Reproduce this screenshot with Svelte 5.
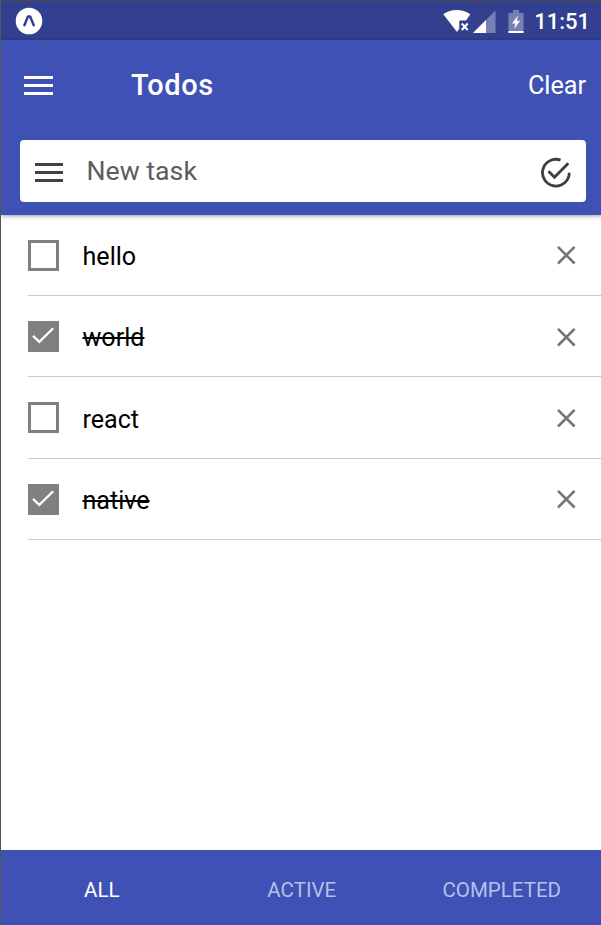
<script>
  let filter = $state('all');
  let todos = $state([
    { id: 1, text: 'hello', done: false },
    { id: 2, text: 'world', done: true },
    { id: 3, text: 'react', done: false },
    { id: 4, text: 'native', done: true },
  ]);
  const tabs = ['all', 'active', 'completed'];
  let shown = $derived(
    todos.filter((t) => filter === 'all' || (filter === 'completed') === t.done)
  );
  const remove = (id) => (todos = todos.filter((t) => t.id !== id));
</script>

<div class="screen">
  <div class="status">
    <svg width="28" height="28" viewBox="0 0 28 28">
      <circle cx="14" cy="14" r="13.3" fill="#fff" />
      <path d="M9.4 18.2 13 9.4h2.1L18.8 18.2" fill="none" stroke="#32408f" stroke-width="2.5" stroke-linecap="round" stroke-linejoin="round" />
    </svg>
    <div class="system">
      <svg class="wifi" width="28" height="24" viewBox="0 0 28 24">
        <path d="M.3 4.2Q13.5-4.2 27.3 4.2L23 10.5H16.3V18.5L14 22Z" fill="#fff" />
        <path d="m18.7 13.5 6 6.5m0-6.5-6 6.5" stroke="#fff" stroke-width="2" />
      </svg>
      <svg class="signal" width="23" height="24" viewBox="0 0 23 24">
        <path d="M0 23 22.5.5V23Z" fill="#7780b5" />
        <path d="M0 23 13 10V23Z" fill="#fff" />
      </svg>
      <svg class="battery" width="16" height="24" viewBox="0 0 16 24">
        <path d="M5 0h6v3h4.5v20H.5V3H5Z" fill="#7780b5" />
        <path d="M.5 21h15v2H.5ZM10 5.5 4 13.5h3.3L6.3 19 12 10.8H8.8Z" fill="#fff" />
      </svg>
      <span>11:51</span>
    </div>
  </div>

  <header>
    <div class="toolbar">
      <button class="menu" aria-label="Menu"><i></i><i></i><i></i></button>
      <h1>Todos</h1>
      <button class="clear" onclick={() => (todos = todos.filter((t) => !t.done))}>Clear</button>
    </div>
    <div class="entry">
      <div class="menu dark"><i></i><i></i><i></i></div>
      <span>New task</span>
      <svg width="32" height="32" viewBox="0 0 32 32" fill="none" stroke="#3e3e3e" stroke-width="2.8">
        <path d="M20.5 3.1A13.4 13.4 0 1 0 29.3 15.8" />
        <path d="m8.5 14.2 6 6L28.3 6.2" />
      </svg>
    </div>
  </header>

  <main>
    {#each shown as todo (todo.id)}
      <div class="row">
        <button class="box" class:checked={todo.done} aria-label="Toggle" onclick={() => (todo.done = !todo.done)}>
          {#if todo.done}
            <svg width="31" height="31" viewBox="0 0 31 31" fill="none" stroke="#fff" stroke-width="2.3">
              <path d="m5 14.8 6.3 6.1L25.2 7.2" />
            </svg>
          {/if}
        </button>
        <span class:done={todo.done}>{todo.text}</span>
        <button class="remove" aria-label="Remove" onclick={() => remove(todo.id)}>
          <svg width="20" height="20" viewBox="0 0 20 20" stroke="#757575" stroke-width="2.6">
            <path d="m2 1.9 16.6 16.6m0-16.6L2 18.5" />
          </svg>
        </button>
      </div>
    {/each}
  </main>

  <nav>
    {#each tabs as tab}
      <button class:active={filter === tab} onclick={() => (filter = tab)}>{tab.toUpperCase()}</button>
    {/each}
  </nav>
</div>

<style>
  .screen {
    box-sizing: border-box;
    width: 601px;
    height: 925px;
    display: flex;
    flex-direction: column;
    border-left: 1px solid #555;
    background: #fff;
    font-family: Roboto, sans-serif;
    overflow: hidden;
  }
  button {
    padding: 0;
    border: 0;
    background: none;
    font: inherit;
    color: inherit;
  }
  svg { display: block; flex: none; }
  .status {
    box-sizing: border-box;
    height: 40px;
    flex: none;
    display: flex;
    align-items: center;
    justify-content: space-between;
    padding: 0 12px 0 14px;
    border-top: 1px solid #4b4b4b;
    background: #32408f;
    color: #fff;
  }
  .system { display: flex; align-items: center; padding-top: 2px; }
  .signal { margin-left: 2px; }
  .battery { margin: 0 10px 0 12px; }
  .system span {
    font-size: 22px;
    font-weight: 500;
    line-height: 28px;
    margin-right: -1px;
  }
  header {
    position: relative;
    box-sizing: border-box;
    height: 174.5px;
    flex: none;
    background: #3f51b5;
    color: #fff;
    box-shadow: 0 1px 4px rgba(0, 0, 0, 0.4);
  }
  .toolbar {
    height: 90px;
    display: flex;
    align-items: center;
    padding: 0 15px 0 23px;
  }
  .menu {
    width: 29px;
    display: flex;
    flex-direction: column;
    gap: 5px;
  }
  .menu i { height: 3px; background: #fff; }
  .menu.dark { width: 28px; padding-bottom: 1px; }
  .menu.dark i { background: #424242; }
  h1 {
    flex: 1;
    margin: 0 0 0 78px;
    font-size: 29px;
    font-weight: 500;
    letter-spacing: 0.6px;
  }
  .clear { font-size: 25.2px; }
  .entry {
    box-sizing: border-box;
    height: 62px;
    margin: 10px 15px 0 19px;
    padding: 3px 14px 0 15px;
    display: flex;
    align-items: center;
    border-radius: 4px;
    background: #fff;
    color: #5c5c5c;
    font-size: 26.7px;
  }
  .entry span { flex: 1; margin-left: 23.5px; padding-bottom: 4px; }
  main { flex: 1; padding-left: 27px; }
  .row {
    box-sizing: border-box;
    height: 81.4px;
    display: flex;
    align-items: center;
    padding-top: 1px;
    border-bottom: 1px solid #cacaca;
    font-size: 25.1px;
    color: #000;
  }
  .row span { flex: 1; margin-left: 23.5px; padding-top: 2.4px; }
  .done { text-decoration: line-through; text-decoration-thickness: 2px; }
  .box {
    box-sizing: border-box;
    width: 31px;
    height: 31px;
    border: 3px solid #808080;
  }
  .checked { border: 0; background: #808080; }
  .remove { margin-right: 25px; }
  nav {
    height: 75px;
    flex: none;
    display: flex;
    background: #3f51b5;
    color: #b6c0ea;
  }
  nav button { flex: 1; padding: 4px 0 0 1.5px; font-size: 20.5px; }
  nav .active { color: #fff; }
</style>
